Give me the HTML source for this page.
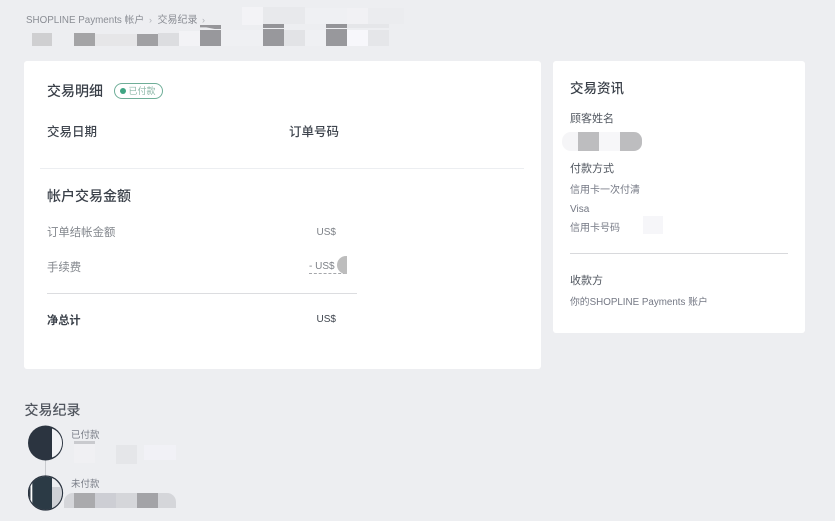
<!DOCTYPE html>
<html lang="zh">
<head>
<meta charset="utf-8">
<style>
html,body{margin:0;padding:0}
body{width:835px;height:521px;overflow:hidden;background:#edeef1;position:relative;font-family:"Liberation Sans","Noto Sans CJK SC",sans-serif;color:#2f3640}
.t{position:absolute;white-space:nowrap;line-height:1;filter:blur(.3px)}
.b{position:absolute}
.card{position:absolute;background:#fff;border-radius:3px}
.h{font-size:14px;font-weight:500;color:#3a4049}
.x{font-size:10px;color:#747884}
.g{font-size:11.4px;color:#83878d}
</style>
</head>
<body>
<div class="t" style="left:26px;top:16px;font-size:9.8px;color:#8a8d94">SHOPLINE Payments 帐户</div>
<div class="t" style="left:149px;top:16px;font-size:9px;color:#b0b3b9">›</div>
<div class="t" style="left:157.5px;top:16px;font-size:10px;color:#8a8d94">交易纪录</div>
<div class="t" style="left:202px;top:16px;font-size:9px;color:#b0b3b9">›</div>

<!-- mosaic header -->
<div class="b" style="left:242px;top:7px;width:21px;height:18px;background:#f3f3f6"></div>
<div class="b" style="left:263px;top:7px;width:42px;height:17px;background:#e8e9ec"></div>
<div class="b" style="left:305px;top:8px;width:42px;height:16px;background:#eff0f3"></div>
<div class="b" style="left:347px;top:8px;width:21px;height:16px;background:#f1f1f4"></div>
<div class="b" style="left:368px;top:8px;width:36px;height:16px;background:#ebecef"></div>
<div class="b" style="left:200px;top:25px;width:21px;height:4px;background:#96969a;clip-path:polygon(0 0,100% 0,100% 100%,70% 100%,30% 60%,0 60%)"></div>
<div class="b" style="left:263px;top:24px;width:21px;height:4px;background:#949498"></div>
<div class="b" style="left:326px;top:24px;width:21px;height:4px;background:#949498"></div>
<div class="b" style="left:347px;top:24px;width:42px;height:4px;background:#e5e6e9"></div>
<div class="b" style="left:32px;top:33px;width:20px;height:13px;background:#cfcfd1"></div>
<div class="b" style="left:74px;top:33px;width:21px;height:13px;background:#a4a4a6"></div>
<div class="b" style="left:95px;top:34px;width:42px;height:12px;background:#e6e6e8"></div>
<div class="b" style="left:137px;top:34px;width:21px;height:12px;background:#a0a0a3"></div>
<div class="b" style="left:158px;top:33px;width:21px;height:13px;background:#dcdde0"></div>
<div class="b" style="left:179px;top:31px;width:21px;height:15px;background:#f3f3f6"></div>
<div class="b" style="left:200px;top:30px;width:21px;height:16px;background:#98989c"></div>
<div class="b" style="left:221px;top:30px;width:42px;height:16px;background:#eff0f3"></div>
<div class="b" style="left:263px;top:29px;width:21px;height:17px;background:#98989c"></div>
<div class="b" style="left:284px;top:30px;width:21px;height:16px;background:#e2e3e6"></div>
<div class="b" style="left:305px;top:30px;width:21px;height:16px;background:#eff0f3"></div>
<div class="b" style="left:326px;top:29px;width:21px;height:17px;background:#98989c"></div>
<div class="b" style="left:347px;top:30px;width:21px;height:16px;background:#f7f7fb"></div>
<div class="b" style="left:368px;top:30px;width:21px;height:16px;background:#e5e6e9"></div>

<!-- main card -->
<div class="card" style="left:24px;top:61px;width:517px;height:308px"></div>
<div class="t h" style="left:47px;top:83.5px">交易明细</div>
<div class="b" style="left:114px;top:83px;width:47px;height:14px;border:1px solid #6fae98;border-radius:8px;background:#fff"></div>
<div class="b" style="left:120px;top:88px;width:6px;height:6px;border-radius:50%;background:#3fa583"></div>
<div class="t" style="left:128.5px;top:86.5px;font-size:9px;color:#8db8a8">已付款</div>
<div class="t" style="left:47px;top:125.5px;font-size:12.5px;font-weight:500;color:#3f454e">交易日期</div>
<div class="t" style="left:289px;top:125.5px;font-size:12.5px;font-weight:500;color:#3f454e">订单号码</div>
<div class="b" style="left:40px;top:168px;width:484px;height:1px;background:#eceef1"></div>
<div class="t h" style="left:47px;top:189px">帐户交易金额</div>
<div class="t g" style="left:47px;top:227.5px">订单结帐金额</div>
<div class="t" style="left:316.5px;top:228px;font-size:10px;color:#7d8187">US$</div>
<div class="t g" style="left:47px;top:262.5px">手续费</div>
<div class="t" style="left:309px;top:261.5px;font-size:10px;color:#7d8187">- US$</div>
<div class="b" style="left:309px;top:273px;width:37px;border-top:1px dashed #a5a7ab"></div>
<div class="b" style="left:337px;top:256px;width:10px;height:18px;background:#bdbdbd;border-radius:10px 0 0 10px"></div>
<div class="b" style="left:47px;top:293px;width:310px;height:1px;background:#dcdde0"></div>
<div class="t" style="left:47px;top:315.5px;font-size:11.2px;font-weight:700;color:#3a4049">净总计</div>
<div class="t" style="left:316.5px;top:314.5px;font-size:10px;color:#3f454e">US$</div>

<!-- side card -->
<div class="card" style="left:553px;top:61px;width:252px;height:272px"></div>
<div class="t h" style="left:570px;top:82px;font-size:13.5px">交易资讯</div>
<div class="t" style="left:570px;top:114px;font-size:11px;color:#50565f">顾客姓名</div>
<div class="b" style="left:562px;top:132px;width:16px;height:19px;background:#f5f5f7;border-radius:9px 0 0 9px"></div>
<div class="b" style="left:578px;top:132px;width:21px;height:19px;background:#bdbdbf"></div>
<div class="b" style="left:599px;top:132px;width:21px;height:19px;background:#f7f7f9"></div>
<div class="b" style="left:620px;top:132px;width:22px;height:19px;background:#bdbdbf;border-radius:0 8px 8px 0"></div>
<div class="t" style="left:570px;top:163.5px;font-size:11px;color:#50565f">付款方式</div>
<div class="t x" style="left:570px;top:185.5px">信用卡一次付清</div>
<div class="t x" style="left:570px;top:204.5px">Visa</div>
<div class="t x" style="left:570px;top:224px">信用卡号码</div>
<div class="b" style="left:643px;top:216px;width:20px;height:18px;background:#f6f6f9"></div>
<div class="b" style="left:570px;top:253px;width:218px;height:1px;background:#d8d9dc"></div>
<div class="t" style="left:570px;top:275.5px;font-size:11px;color:#50565f">收款方</div>
<div class="t x" style="left:570px;top:298px;font-size:9.8px">你的SHOPLINE Payments 账户</div>

<!-- timeline -->
<div class="t" style="left:24.5px;top:403px;font-size:14px;font-weight:500;color:#50555e">交易纪录</div>
<div class="b" style="left:45px;top:460px;width:1px;height:16px;background:#c9cbcf"></div>
<svg class="b" style="left:28px;top:425px" width="36" height="86" viewBox="0 0 36 86">
  <defs><clipPath id="c2"><circle cx="17.5" cy="68" r="16.5"/></clipPath></defs>
  <circle cx="17.5" cy="18" r="17.5" fill="#2b3440"/>
  <path d="M24 3.5 A15.5 15.5 0 0 1 24 32.5 Z" fill="#f1f2f5"/>
  <circle cx="17.5" cy="68" r="17" fill="#edeef1" stroke="#2b3440" stroke-width="1.3"/>
  <g clip-path="url(#c2)">
    <rect x="4" y="50" width="20" height="36" fill="#2b3a45"/>
    <rect x="24" y="62" width="12" height="24" fill="#cfd1d6"/>
    <rect x="0" y="50" width="2.5" height="36" fill="#2b3440"/>
    <rect x="2.5" y="50" width="1.8" height="36" fill="#fff"/>
  </g>
</svg>
<div class="t" style="left:71px;top:430.5px;font-size:9.5px;color:#7a7e88">已付款</div>
<div class="b" style="left:74px;top:441px;width:21px;height:3px;background:#c9cace"></div>
<div class="b" style="left:74px;top:444px;width:21px;height:19px;background:#f0f0f3"></div>
<div class="b" style="left:116px;top:445px;width:21px;height:19px;background:#e5e6e9"></div>
<div class="b" style="left:144px;top:445px;width:32px;height:15px;background:#f1f1f6"></div>
<div class="t" style="left:71px;top:480px;font-size:9.5px;color:#7a7e88">未付款</div>
<div class="b" style="left:64px;top:493px;width:112px;height:15px;background:#d5d6da;border-radius:9px 9px 0 0"></div>
<div class="b" style="left:74px;top:493px;width:21px;height:15px;background:#aaaaad"></div>
<div class="b" style="left:95px;top:493px;width:21px;height:15px;background:#cdced4"></div>
<div class="b" style="left:137px;top:493px;width:21px;height:15px;background:#a3a3a7"></div>
</body>
</html>
